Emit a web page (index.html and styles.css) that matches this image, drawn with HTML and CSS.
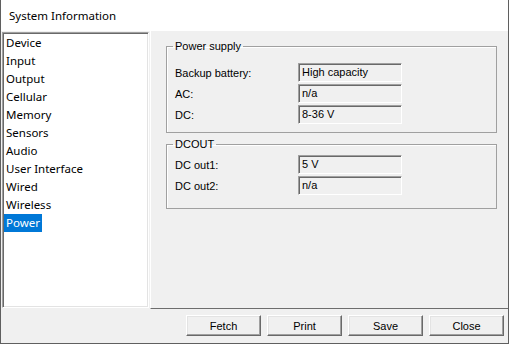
FILE: index.html
```html
<!DOCTYPE html>
<html>
<head>
<meta charset="utf-8">
<link rel="stylesheet" href="styles.css">
</head>
<body>
<div class="window">
  <div class="titlebar">System Information</div>
  <div class="main">
    <ul class="listbox">
      <li class="item">Device</li>
      <li class="item">Input</li>
      <li class="item">Output</li>
      <li class="item">Cellular</li>
      <li class="item">Memory</li>
      <li class="item">Sensors</li>
      <li class="item">Audio</li>
      <li class="item">User Interface</li>
      <li class="item">Wired</li>
      <li class="item">Wireless</li>
      <li class="item selected">Power</li>
    </ul>
    <div class="panel">
      <fieldset class="group group-supply">
        <legend class="legend">Power supply</legend>
        <div class="row"><span class="label">Backup battery:</span><span class="field">High capacity</span></div>
        <div class="row"><span class="label">AC:</span><span class="field">n/a</span></div>
        <div class="row"><span class="label">DC:</span><span class="field">8-36 V</span></div>
      </fieldset>
      <fieldset class="group group-dcout">
        <legend class="legend">DCOUT</legend>
        <div class="row"><span class="label">DC out1:</span><span class="field">5 V</span></div>
        <div class="row"><span class="label">DC out2:</span><span class="field">n/a</span></div>
      </fieldset>
    </div>
  </div>
  <div class="buttons">
    <button class="btn">Fetch</button>
    <button class="btn">Print</button>
    <button class="btn">Save</button>
    <button class="btn">Close</button>
  </div>
</div>
</body>
</html>
```
FILE: styles.css
```css
html, body {
  margin: 0;
  padding: 0;
  background: #ffffff;
}

.window {
  width: 509px;
  height: 344px;
  box-sizing: border-box;
  border: 1px solid #5f5f5f;
  border-top: 0;
  background: #f0f0f0;
  display: flex;
  flex-direction: column;
  font-family: "Liberation Sans", Arial, sans-serif;
  font-size: 11px;
  color: #000;
}

.titlebar {
  height: 31px;
  line-height: 31px;
  background: #ffffff;
  padding-left: 8px;
  font-family: "Noto Sans", "Open Sans", sans-serif;
  font-size: 11.5px;
  color: #000;
}

.main {
  display: flex;
  height: 278px;
}

.listbox {
  list-style: none;
  margin: 1px 1px 0 1px;
  width: 147px;
  height: 276px;
  box-sizing: border-box;
  background: #ffffff;
  border: 1px solid;
  border-color: #a0a0a0 #ffffff #ffffff #a0a0a0;
  box-shadow: inset 1px 1px 0 #696969, inset -1px -1px 0 #e3e3e3;
  padding: 1px 0 0 1px;
  font-family: "Noto Sans", "Open Sans", sans-serif;
  font-size: 11.5px;
}

.item {
  width: fit-content;
  height: 18px;
  line-height: 18px;
  padding: 0 2px;
  color: #000;
}

.item.selected {
  background: #0078d7;
  color: #ffffff;
}

.panel {
  flex: 1;
  box-sizing: border-box;
  height: 278px;
  border-left: 1px solid #ffffff;
  border-bottom: 1px solid #6d6d6d;
  padding: 8px 11px 0 15px;
}

.group {
  margin: 0;
  border: 1px solid #a0a0a0;
  box-shadow: inset 1px 1px 0 #ffffff;
  padding: 10px 8px 8px 8px;
  min-width: 0;
}

.group-dcout {
  margin-top: 4px;
  padding-top: 4px;
  padding-bottom: 13px;
}

.legend {
  padding: 0 2px;
  margin-left: -2px;
  line-height: 14px;
}

.row {
  display: flex;
  align-items: center;
  height: 19px;
}

.row + .row {
  margin-top: 2px;
}

.label {
  width: 123px;
}

.field {
  width: 104px;
  height: 19px;
  box-sizing: border-box;
  border: 1px solid;
  border-color: #a0a0a0 #ffffff #ffffff #a0a0a0;
  box-shadow: inset 1px 1px 0 #696969;
  background: #f0f0f0;
  padding: 0 0 0 3px;
  line-height: 17px;
}

.buttons {
  display: flex;
  justify-content: flex-end;
  gap: 6px;
  padding: 6px 4px 0 0;
}

.btn {
  width: 75px;
  height: 21px;
  box-sizing: border-box;
  margin: 0;
  padding: 0;
  font-family: "Liberation Sans", Arial, sans-serif;
  font-size: 11px;
  color: #000;
  background: #f0f0f0;
  border: 1px solid;
  border-color: #ffffff #696969 #696969 #ffffff;
  box-shadow: inset -1px -1px 0 #a0a0a0, inset 1px 1px 0 #e3e3e3;
  border-radius: 0;
}
```
